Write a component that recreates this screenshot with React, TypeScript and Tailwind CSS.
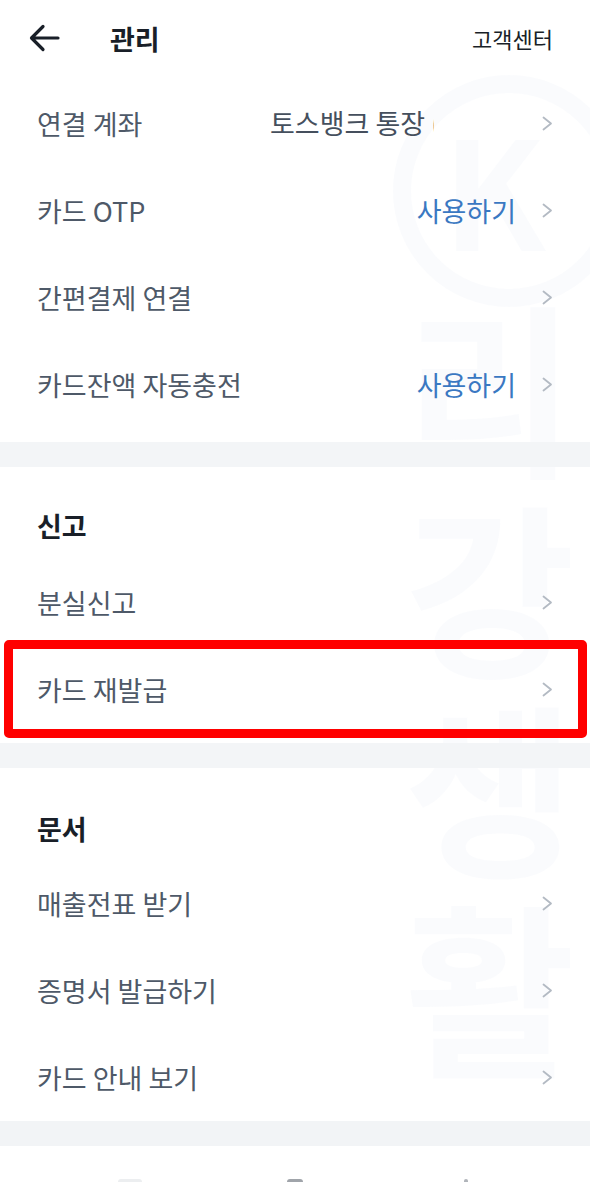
import React from "react";

const FONT = "font-['Noto_Sans_CJK_KR','Noto_Sans',sans-serif]";

function Chevron() {
  return (
    <svg width="11" height="15" viewBox="0 0 11 15" className="shrink-0">
      <polyline points="1.5,1.5 9,7.5 1.5,13.5" fill="none" stroke="#b3bac3" strokeWidth="1.8" strokeLinecap="round" strokeLinejoin="round" />
    </svg>
  );
}

function Row({ label, value, blue }: { label: string; value?: string; blue?: boolean }) {
  return (
    <div className="flex h-[87px] items-center pl-[37px] pr-[37px]">
      <span className="text-[27px] leading-none text-[#4e5968] whitespace-nowrap">{label}</span>
      <div className="flex-1" />
      {value && (
        <span className={`text-[27px] leading-none whitespace-nowrap mr-[26px] ${blue ? "text-[#3a78c2]" : "text-[#4e5968]"}`}>{value}</span>
      )}
      <Chevron />
    </div>
  );
}

function AccountRow() {
  return (
    <div className="flex h-[87px] items-center pl-[37px] pr-[37px]">
      <span className="w-[233px] text-[27px] leading-none text-[#4e5968] whitespace-nowrap">연결 계좌</span>
      <div className="w-[164px] overflow-hidden">
        <span className="text-[27px] leading-none text-[#454f5d] whitespace-nowrap">토스뱅크 통장 (1000-1234-5678)</span>
      </div>
      <div className="flex-1" />
      <Chevron />
    </div>
  );
}

function SectionTitle({ title }: { title: string }) {
  return (
    <div className="flex h-[36px] items-center pl-[37px]">
      <span className="text-[27px] leading-none font-bold text-[#191f28]">{title}</span>
    </div>
  );
}

export default function App() {
  return (
    <div className={`relative w-[590px] h-[1182px] overflow-hidden bg-white ${FONT}`}>
      {/* Watermark (behind content) */}
      <div className="pointer-events-none absolute inset-0">
        <div className="absolute left-[393px] top-[75px] w-[232px] h-[232px] rounded-full border-[18px] border-[rgba(190,205,225,0.08)] flex items-center justify-center">
          <span className="text-[150px] font-bold leading-none text-[rgba(190,205,225,0.08)] -mt-[10px] -ml-[30px]">K</span>
        </div>
        <div className="absolute left-[405px] top-[282px] flex flex-col items-center text-[185px] leading-[200px] font-bold text-[rgba(190,205,225,0.08)]">
          <span>리</span>
          <span>강</span>
          <span>생</span>
          <span>활</span>
        </div>
      </div>

      <div className="relative">
        {/* Header */}
        <div className="flex h-[76px] items-center pl-[29px] pr-[37px]">
          <svg width="31" height="28" viewBox="0 0 31 28" className="shrink-0">
            <path d="M29 14 H3 M14 2.5 L2.5 14 L14 25.5" fill="none" stroke="#191f28" strokeWidth="3.2" strokeLinecap="round" strokeLinejoin="round" />
          </svg>
          <span className="ml-[50px] text-[27px] leading-none font-semibold text-[#191f28]">관리</span>
          <div className="flex-1" />
          <span className="text-[22px] leading-none text-[#191f28]">고객센터</span>
        </div>

        {/* Section 1 */}
        <div className="pt-[4px] pb-[14px]">
          <AccountRow />
          <Row label="카드 OTP" value="사용하기" blue />
          <Row label="간편결제 연결" />
          <Row label="카드잔액 자동충전" value="사용하기" blue />
        </div>
        <div className="h-[25px] bg-[#f2f4f6]/90" />

        {/* Section 2 */}
        <div className="pt-[40px] pb-[10px]">
          <SectionTitle title="신고" />
          <div className="mt-[16px]">
            <Row label="분실신고" />
            <Row label="카드 재발급" />
          </div>
        </div>
        <div className="h-[25px] bg-[#f2f4f6]/90" />

        {/* Section 3 */}
        <div className="pt-[42px]">
          <SectionTitle title="문서" />
          <div className="mt-[14px]">
            <Row label="매출전표 받기" />
            <Row label="증명서 발급하기" />
            <Row label="카드 안내 보기" />
          </div>
        </div>
        <div className="h-[25px] bg-[#f2f4f6]" />
      </div>

      {/* bottom partial nav icons */}
      <div className="absolute bottom-0 left-0 right-0 h-[4px]">
        <div className="absolute left-[118px] top-[1px] w-[24px] h-[3px] bg-[#eceef0] rounded-t" />
        <div className="absolute left-[287px] top-[1px] w-[16px] h-[3px] bg-[#a0a4aa] rounded-t" />
        <div className="absolute left-[464px] top-[1px] w-[4px] h-[3px] bg-[#b0b4ba] rounded-t" />
      </div>

      {/* Red highlight box */}
      <div className="pointer-events-none absolute left-[4px] top-[640px] w-[583px] h-[98px] rounded-[5px] border-[9px] border-[#ff0000]" />
    </div>
  );
}
